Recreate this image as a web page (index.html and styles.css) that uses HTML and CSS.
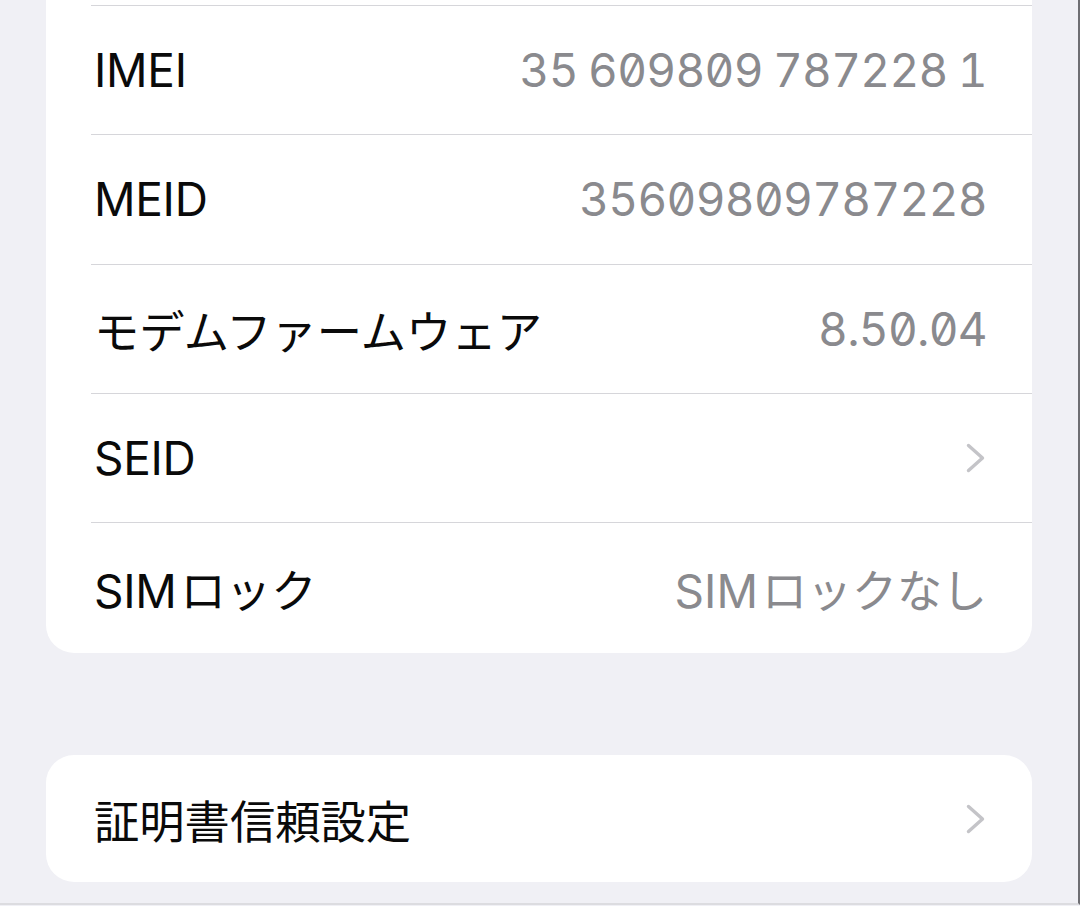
FILE: index.html
```html
<!DOCTYPE html>
<html lang="ja">
<head>
<meta charset="utf-8">
<title>情報</title>
<link rel="stylesheet" href="styles.css">
</head>
<body>
<div class="screen">
  <div class="card card-top">
    <div class="stub"></div>
    <div class="row">
      <span class="label">IMEI</span>
      <span class="value num imei">35 609809 787228 1</span>
    </div>
    <div class="row">
      <span class="label">MEID</span>
      <span class="value num">35609809787228</span>
    </div>
    <div class="row">
      <span class="label ja">モデムファームウェア</span>
      <span class="value num">8.50.04</span>
    </div>
    <div class="row">
      <span class="label">SEID</span>
      <svg class="chev" viewBox="0 0 22 30" width="22" height="30"><path d="M3.5 2.5 L17.5 15 L3.5 27.5" fill="none" stroke="#c4c4c8" stroke-width="3.4" stroke-linecap="round" stroke-linejoin="round"/></svg>
    </div>
    <div class="row">
      <span class="label">SIM<span class="ja gap">ロック</span></span>
      <span class="value">SIM<span class="ja gap">ロックなし</span></span>
    </div>
  </div>
  <div class="card card-single">
    <div class="row row-first">
      <span class="label ja">証明書信頼設定</span>
      <svg class="chev" viewBox="0 0 22 30" width="22" height="30"><path d="M3.5 2.5 L17.5 15 L3.5 27.5" fill="none" stroke="#c4c4c8" stroke-width="3.4" stroke-linecap="round" stroke-linejoin="round"/></svg>
    </div>
  </div>
</div>
</body>
</html>
```

FILE: styles.css
```css
html, body {
  margin: 0;
  padding: 0;
}
body {
  background: #f0f0f5;
  font-family: Inter, "Noto Sans CJK JP", sans-serif;
  color: #000;
}
.screen {
  width: 1078px;
  height: 903px;
  border-right: 2px solid #6e6e73;
  border-bottom: 2px solid #dcdce0;
  overflow: hidden;
  display: flex;
  flex-direction: column;
}
.card {
  background: #fff;
  margin-left: 46px;
  width: 986px;
}
.card-top {
  border-radius: 0 0 28px 28px;
}
.stub {
  height: 5px;
}
.row {
  box-sizing: border-box;
  margin-left: 45px;
  padding-right: 45px;
  height: 129.3px;
  border-top: 1.5px solid #d6d6da;
  display: flex;
  align-items: center;
  justify-content: space-between;
}
.card-top .row:last-child {
  height: 131px;
}
.card-single {
  margin-top: 102px;
  border-radius: 28px;
}
.card-single .row-first {
  border-top: none;
  height: 127px;
}
.label {
  font-size: 46px;
  letter-spacing: -0.3px;
  padding-left: 3px;
  color: #0a0a0a;
}
.ja {
  font-size: 45.3px;
  letter-spacing: 0;
}
.gap {
  padding-left: 4px;
}
.value {
  font-size: 46px;
  color: #8a8a8e;
}
.value .ja {
  font-size: 45px;
}
.num {
  font-feature-settings: "tnum" 1, "zero" 1;
  letter-spacing: -0.7px;
}
.imei {
  word-spacing: -1.5px;
}
.chev {
  display: block;
}
```
